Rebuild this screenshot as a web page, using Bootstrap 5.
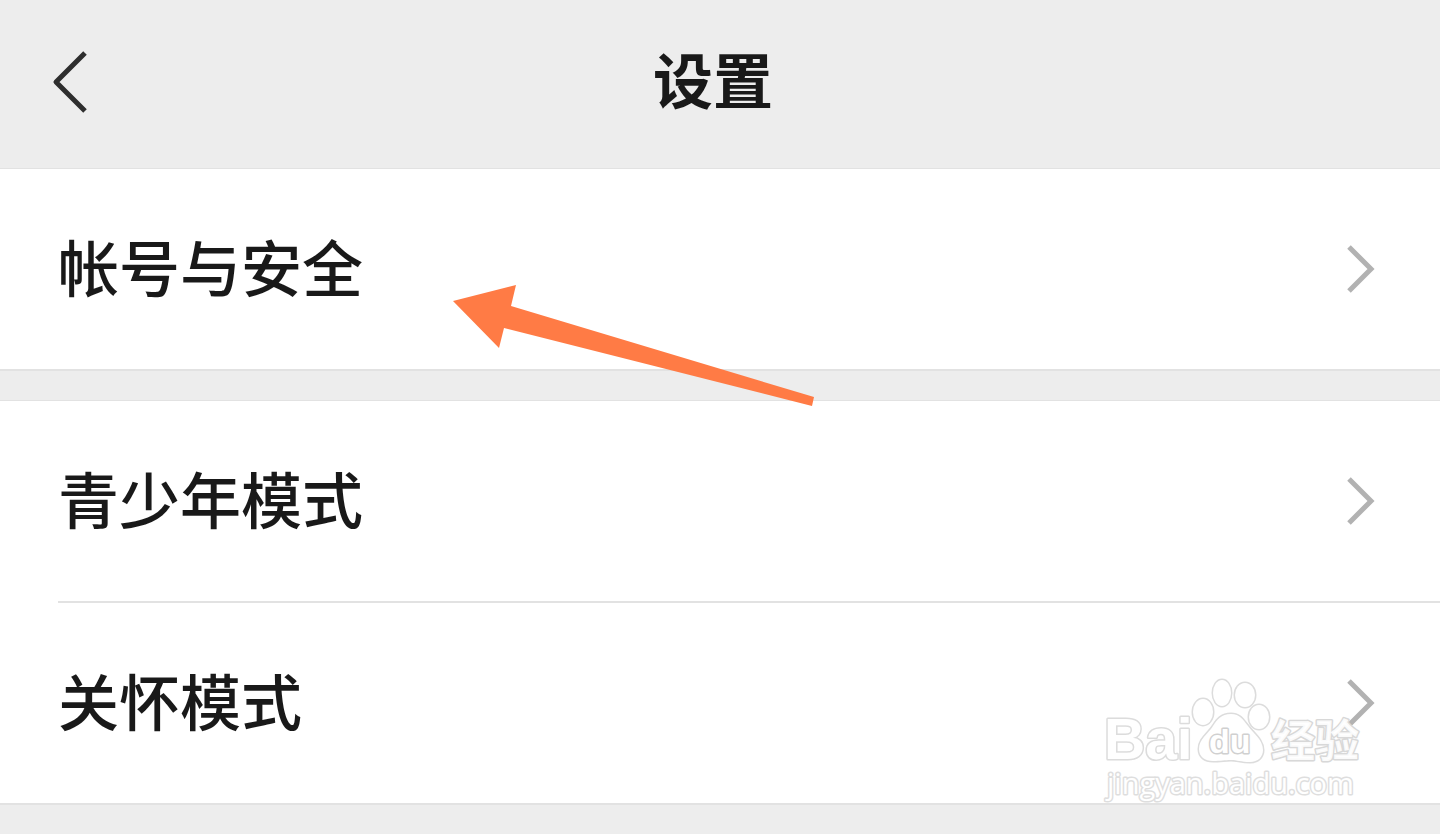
<!DOCTYPE html>
<html lang="zh-CN">
<head>
<meta charset="utf-8">
<meta name="viewport" content="width=device-width, initial-scale=1">
<title>设置</title>
<link href="https://cdn.jsdelivr.net/npm/bootstrap@5.3.0/dist/css/bootstrap.min.css" rel="stylesheet">
<style>
body { background: #ededed; color: #191919; font-family: "Noto Sans CJK SC", sans-serif; }
.topbar { height: 169px; border-bottom: 1px solid #e2e2e2; padding: 0 114px 6px 40px; }
.back-btn { width: 60px; height: 80px; }
.topbar h1 { font-size: 60px; line-height: 80px; font-weight: 700; padding-bottom: 6px; }
.settings-group { border-bottom: 2px solid #e2e2e2; background: #fff; }
.settings-group + .settings-group { margin-top: 29px; border-top: 1px solid #e2e2e2; }
.setting-row { height: 200px; padding: 0 65px 0 58px; font-size: 61px; line-height: 80px; font-weight: 500; color: #191919; }
.setting-row span { padding-bottom: 6px; }
.row-rule { height: 2px; margin-left: 58px; background: #e2e2e2; }
.pointer-arrow { left: 450px; top: 280px; pointer-events: none; }
.watermark { right: 70px; bottom: -4px; pointer-events: none; }
</style>
</head>
<body>
<header class="topbar d-flex align-items-center">
  <button type="button" class="back-btn btn border-0 p-0" aria-label="返回">
    <svg class="d-block" width="60" height="80" fill="none" stroke="#2e2e2e" stroke-width="5" stroke-linejoin="round"><path d="M45 12 16 41 45 70"/></svg>
  </button>
  <h1 class="flex-grow-1 text-center mb-0">设置</h1>
</header>
<main>
  <nav class="settings-group" aria-label="帐号">
    <a href="#account" class="setting-row d-flex align-items-center justify-content-between text-decoration-none"><span>帐号与安全</span>
      <svg width="30" height="50" fill="none" stroke="#b2b2b2" stroke-width="5"><path d="M4 3 26 25 4 47"/></svg></a>
  </nav>
  <nav class="settings-group position-relative" aria-label="模式">
    <a href="#youth" class="setting-row d-flex align-items-center justify-content-between text-decoration-none"><span>青少年模式</span>
      <svg width="30" height="50" fill="none" stroke="#b2b2b2" stroke-width="5"><path d="M4 3 26 25 4 47"/></svg></a>
    <div class="row-rule"></div>
    <a href="#care" class="setting-row d-flex align-items-center justify-content-between text-decoration-none"><span>关怀模式</span>
      <svg width="30" height="50" fill="none" stroke="#b2b2b2" stroke-width="5"><path d="M4 3 26 25 4 47"/></svg></a>
    <svg class="watermark position-absolute" width="270" height="130" viewBox="1100 677 270 130" fill="#fff" stroke="#dcdcdc" stroke-width="2" stroke-linejoin="round" paint-order="stroke">
      <g stroke-width="3">
        <ellipse cx="1203" cy="712" rx="10" ry="13"/>
        <ellipse cx="1222" cy="693" rx="9" ry="13"/>
        <ellipse cx="1245" cy="695" rx="10" ry="12"/>
        <ellipse cx="1259" cy="717" rx="10" ry="12"/>
        <path d="M1231 714c-10 0-14 6-18 12-5 8-14 13-14 23 0 8 6 12 14 12 8 0 12-1 18-1s10 2 19 2c8 0 13-5 13-12 0-10-9-16-15-24-5-6-8-12-17-12z"/>
      </g>
      <text x="1104" y="759" font-family="Liberation Sans, sans-serif" font-weight="700" font-size="57" stroke-width="3">Bai</text>
      <text x="1209" y="753" font-family="Liberation Sans, sans-serif" font-weight="700" font-size="34" stroke-width="3" stroke="#d0d0d0">du</text>
      <text x="1271" y="757" font-family="Noto Sans CJK SC, sans-serif" font-weight="700" font-size="44" stroke-width="3" fill-opacity=".9" stroke="#d8d8d8">经验</text>
      <text x="1107" y="794" font-family="Open Sans, sans-serif" font-size="29" stroke="#dedede" stroke-width="3">jingyan.baidu.com</text>
    </svg>
  </nav>
</main>
<svg class="pointer-arrow position-absolute" width="370" height="130" fill="#ff7b45" aria-hidden="true"><path d="M3 21 66 5 61 26 364 117 362 126 54 48 49 68z"/></svg>
<script src="https://cdn.jsdelivr.net/npm/bootstrap@5.3.0/dist/js/bootstrap.bundle.min.js"></script>
</body>
</html>
